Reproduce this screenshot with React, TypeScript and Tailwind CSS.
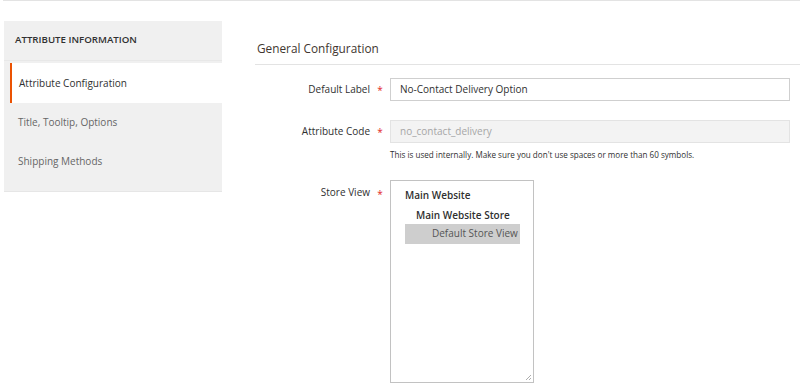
export default function App() {
  const tabs = ["Title, Tooltip, Options", "Shipping Methods"];

  return (
    <div className="w-[800px] h-[391px] bg-white overflow-hidden font-['Open_Sans',sans-serif] text-[#303030]">
      <div className="ml-[3px] h-px bg-[#e3e3e3]" />
      <div className="flex pt-[20px]">
        {/* sidebar */}
        <aside className="ml-[4px] w-[218px] h-[171px] bg-[#f0f0f0] border-b border-[#e6e6e6] flex flex-col">
          <div className="h-[40px] flex items-center pl-[11px] text-[9.7px] font-semibold text-[#303030] border-b border-[#e8e8e8]">
            ATTRIBUTE INFORMATION
          </div>
          <div className="ml-[6px] mt-[2px] h-[40px] bg-white border-l-2 border-[#eb5202] flex items-center pl-[7px] text-[10px] text-[#303030]">
            Attribute Configuration
          </div>
          {tabs.map((t) => (
            <div key={t} className="h-[39px] flex items-center pl-[14px] text-[10px] text-[#666]">
              {t}
            </div>
          ))}
        </aside>

        {/* main */}
        <main className="flex-1 ml-[33px] pt-[19px]">
          <h2 className="pl-[2px] text-[11.8px] font-normal text-[#41362f] pb-[6px] border-b border-[#e3e3e3]">
            General Configuration
          </h2>

          <div className="mt-[13px] flex items-center">
            <label className="w-[115px] text-right text-[10px] text-[#303030]">Default Label</label>
            <span className="w-[20px] text-center text-[10px] text-[#e22626] pt-[3px]">*</span>
            <div className="w-[400px] h-[23px] border border-[#cfcfcf] flex items-center px-[9px] text-[10px] text-[#303030]">
              No-Contact Delivery Option
            </div>
          </div>

          <div className="mt-[19px] flex items-start">
            <label className="w-[115px] h-[23px] flex items-center justify-end text-[10px] text-[#303030]">Attribute Code</label>
            <span className="w-[20px] h-[23px] flex items-center justify-center text-[10px] text-[#e22626] pt-[3px]">*</span>
            <div className="flex flex-col">
              <div className="w-[400px] h-[23px] bg-[#f3f3f3] border border-[#e3e3e3] flex items-center px-[9px] text-[10px] text-[#a6a6a6]">
                no_contact_delivery
              </div>
              <p className="mt-[6px] text-[8.1px] text-[#303030]">
                This is used internally. Make sure you don't use spaces or more than 60 symbols.
              </p>
            </div>
          </div>

          <div className="mt-[19px] flex items-start">
            <label className="w-[115px] pt-[5px] text-right text-[10px] text-[#303030]">Store View</label>
            <span className="w-[20px] pt-[7px] text-center text-[10px] text-[#e22626]">*</span>
            <div className="relative w-[144px] h-[203px] border border-[#c2c2c2] px-[14px] pt-[7px]">
              <div className="text-[10px] font-semibold text-[#303030]">Main Website</div>
              <div className="mt-[5px] pl-[11px] text-[10px] font-semibold text-[#303030]">Main Website Store</div>
              <div className="mt-[1px] h-[20px] w-[115px] bg-[#cecece] flex items-center pl-[27px] text-[10px] text-[#555] whitespace-nowrap">
                Default Store View
              </div>
              <svg className="absolute right-[1px] bottom-[1px]" width="7" height="7" viewBox="0 0 7 7">
                <path d="M1 6 L6 1 M4 6 L6 4" stroke="#999" strokeWidth="0.8" />
              </svg>
            </div>
          </div>
        </main>
      </div>
    </div>
  );
}
